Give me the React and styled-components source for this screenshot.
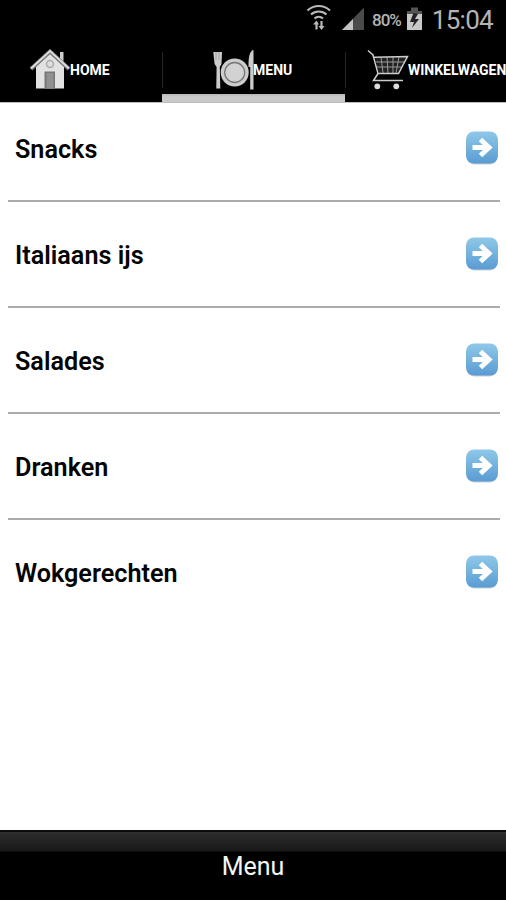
import styled, { createGlobalStyle } from 'styled-components'

const GlobalStyle = createGlobalStyle`
    body {
        margin: 0;
        background: #fff;
        font-family: Roboto, 'Liberation Sans', sans-serif;
    }
`

const Screen = styled.div`
    display: flex;
    flex-direction: column;
    width: 506px;
    height: 900px;
    overflow: hidden;
    background: #fff;
`

const StatusBar = styled.header`
    display: flex;
    align-items: center;
    justify-content: flex-end;
    height: 40px;
    flex: none;
    box-sizing: border-box;
    padding-right: 13px;
    background: #000;
    color: #b4b4b4;
`

const StatusIcons = styled.svg`
    width: 64px;
    height: 40px;
    margin-right: 2px;
`

const BatteryText = styled.span`
    width: 34px;
    font-size: 17px;
    font-weight: 500;
    letter-spacing: -1px;
    white-space: nowrap;
`

const BatteryIcon = styled.svg`
    width: 16px;
    height: 24px;
    margin: 0 8px 3px 0;
`

const Clock = styled.span`
    width: 63px;
    font-size: 26px;
    line-height: 40px;
    letter-spacing: -0.7px;
    white-space: nowrap;
    text-align: right;
`

const TabBar = styled.nav`
    display: flex;
    flex: none;
    height: 63px;
    box-sizing: border-box;
    background: #000;
    border-bottom: 1px solid #bdbdbd;
`

const Tab = styled.div`
    display: flex;
    flex: none;
    flex-direction: column;
    justify-content: space-between;
    width: ${(props) => props.$width}px;
`

const TabContent = styled.div`
    display: flex;
    align-items: center;
    height: 36px;
    margin-top: 12px;
    padding-left: ${(props) => props.$indent}px;
    box-sizing: border-box;
    border-left: ${(props) => (props.$divider ? '1px solid #252525' : 'none')};
`

const TabIcon = styled.svg`
    flex: none;
    width: 40px;
    height: 42px;
    overflow: visible;
`

const TabLabel = styled.span`
    color: #fff;
    font-size: 14px;
    font-weight: 700;
    white-space: nowrap;
`

const TabIndicator = styled.div`
    height: 8px;
    background: linear-gradient(#b5b5b5, #c9c9c9 30%, #c9c9c9);
`

const List = styled.ul`
    flex: 1;
    margin: 0;
    padding: 0 6px 0 8px;
    list-style: none;
`

const ListItem = styled.li`
    display: flex;
    align-items: center;
    justify-content: space-between;
    height: 106px;
    box-sizing: border-box;
    padding: 4px 1px 0 7px;
    border-bottom: ${(props) => (props.$last ? 'none' : '2px solid #ababab')};

    &:first-child {
        height: 99px;
        padding-top: 0;
        padding-bottom: 4px;
    }

    &:last-child {
        padding-top: 2px;
    }
`

const ItemName = styled.span`
    color: #050505;
    font-size: 25.2px;
    font-weight: 600;
    line-height: 30px;
    white-space: nowrap;
`

const Arrow = styled.svg`
    width: 34px;
    height: 36px;
    margin-top: -4px;
`

const Footer = styled.footer`
    flex: none;
    height: 70px;
    box-sizing: border-box;
    border-top: 2px solid #0b0b0b;
    background: linear-gradient(#303030, #292929 3px, #191919 19px, #000 20px);
    color: #f5f5f5;
    font-size: 25px;
    line-height: 30px;
    padding-top: 20px;
    text-align: center;
`

const items = ['Snacks', 'Italiaans ijs', 'Salades', 'Dranken', 'Wokgerechten']

function HomeIcon() {
    return (
        <TabIcon viewBox="30 49 40 42">
            <path d="M60 52h3.5v10H60z" fill="#ccc" />
            <path d="M36 66L50 53l14 13v22.5H36z" fill="#e2e2e2" />
            <path d="M31 69L50 51.5 69 69" fill="none" stroke="#777" strokeWidth="4" />
            <path d="M31 68.5L50 51 69 68.5" fill="none" stroke="#ddd" strokeWidth="2" />
            <circle cx="50" cy="64" r="3.5" fill="#ddd" stroke="#aaa" strokeWidth="1.5" />
            <path d="M44.5 71.5h10.5v17H44.5z" fill="#777" />
            <path d="M46.5 73h7v15.5h-7z" fill="#919191" />
        </TabIcon>
    )
}

function PlateIcon() {
    return (
        <TabIcon viewBox="213 49 40 42">
            <path d="M213.3 52h8.7l-.5 12-1.7 3 .5 21.5h-4l.3-21.5-2-3z" fill="#ccc" />
            <path d="M216 52v8M219 52v8" stroke="#888" strokeWidth=".6" />
            <circle cx="234.7" cy="72.5" r="14" fill="#ccc" />
            <circle cx="234.7" cy="72.5" r="10" fill="#d2d2d2" stroke="#777" strokeWidth="1.3" />
            <path d="M253.5 50v39.5h-3.3V67h-1.600c-.3-7 .5-16.500 4.900-17z" fill="#ccc" />
        </TabIcon>
    )
}

function CartIcon() {
    return (
        <TabIcon viewBox="368 49 40 42">
            <path d="M375 57h33l-9 16h-20z" fill="#222" />
            <path
                d="M376 62h29M377 67h25M381 57l2 16M387 57l1 16M393 57v16M399 57l-3 16"
                fill="none"
                stroke="#999"
                strokeWidth="1"
            />
            <path
                d="M368 50.5l5 4.5 5 18.5-4.5 7H403M374 57.2l33.5-.7-9 17H378"
                fill="none"
                stroke="#ccc"
                strokeWidth="1.5"
            />
            <circle cx="377.3" cy="86.3" r="2.9" fill="#ddd" />
            <circle cx="396.3" cy="86.3" r="2.9" fill="#ddd" />
        </TabIcon>
    )
}

function ArrowIcon() {
    return (
        <Arrow viewBox="0 0 34 36">
            <defs>
                <linearGradient id="arrowBlue" x1="0" y1="0" x2="0" y2="1">
                    <stop offset="0" stopColor="#8fc8e8" />
                    <stop offset="1" stopColor="#5a9bd2" />
                </linearGradient>
            </defs>
            <rect x="1.5" y="2.5" width="31" height="32" rx="8" fill="#c5d0d8" />
            <rect x="1" y="1.5" width="32" height="32" rx="8" fill="url(#arrowBlue)" />
            <path d="M7.500 17.500h16M15.500 9.500l8.500 8-8.500 8" fill="none" stroke="#fff" strokeWidth="5" />
        </Arrow>
    )
}

function App() {
    return (
        <Screen>
            <GlobalStyle />
            <StatusBar>
                <StatusIcons viewBox="306 0 64 40">
                    <g fill="none" stroke="#b9b9b9" strokeWidth="2.2">
                        <path d="M307.500 10.500c6.500-6 16-6 22.500 0M311 14.500c4.500-4 11-4 15.500 0M314.500 18.500c2.500-2.300 6-2.300 8.500 0" />
                        <path d="M316.500 29.500v-7M321.500 21v7" />
                    </g>
                    <path d="M313 24.500l3.500-4 2.500 4zM318.500 26h6l-3 4z" fill="#b9b9b9" />
                    <path d="M364 7.500V30h-22z" fill="#4b4b4b" />
                    <path d="M353 19v11h-11z" fill="#c4c4c4" />
                </StatusIcons>
                <BatteryText>80%</BatteryText>
                <BatteryIcon viewBox="406 6 16 24">
                    <path d="M411 6.500h7V10h4v4h-15v-4h4z" fill="#555" />
                    <path d="M407 13h15v16h-15z" fill="#c8c8c8" />
                    <path d="M413.500 12l-3.500 9h4l-2 6 7-9h-4l3-5z" fill="#222" />
                </BatteryIcon>
                <Clock>15:04</Clock>
            </StatusBar>
            <TabBar>
                <Tab $width={162}>
                    <TabContent $indent={30}>
                        <HomeIcon />
                        <TabLabel>HOME</TabLabel>
                    </TabContent>
                </Tab>
                <Tab $width={183}>
                    <TabContent $indent={50} $divider>
                        <PlateIcon />
                        <TabLabel>MENU</TabLabel>
                    </TabContent>
                    <TabIndicator />
                </Tab>
                <Tab $width={184}>
                    <TabContent $indent={22} $divider>
                        <CartIcon />
                        <TabLabel>WINKELWAGEN</TabLabel>
                    </TabContent>
                </Tab>
            </TabBar>
            <List>
                {items.map((item, index) => (
                    <ListItem key={item} $last={index === items.length - 1}>
                        <ItemName>{item}</ItemName>
                        <ArrowIcon />
                    </ListItem>
                ))}
            </List>
            <Footer>Menu</Footer>
        </Screen>
    )
}

export default App
